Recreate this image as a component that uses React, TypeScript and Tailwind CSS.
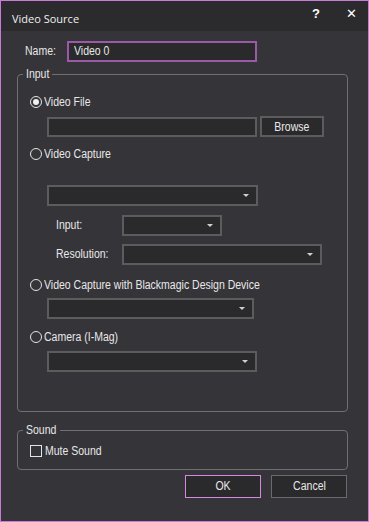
import { ReactNode } from "react";

const font = { fontFamily: '"Liberation Sans", Arial, sans-serif' };

// WinForms text looks condensed next to Arial, squeeze it a bit
const T = ({ children, center }: { children: ReactNode; center?: boolean }) => (
  <span className={`inline-block whitespace-nowrap scale-x-[0.84] ${center ? "origin-center" : "origin-left"}`}>
    {children}
  </span>
);

const Radio = ({ checked, label }: { checked?: boolean; label: string }) => (
  <div className="flex items-center h-[16px]">
    <span className="w-[12px] h-[12px] rounded-full border border-[#e4e4e4] flex items-center justify-center shrink-0">
      {checked && <span className="w-[6px] h-[6px] rounded-full bg-[#f0f0f0]" />}
    </span>
    <span className="ml-[2px]">
      <T>{label}</T>
    </span>
  </div>
);

const Combo = ({ width, className = "" }: { width: number; className?: string }) => (
  <div
    className={`h-[21px] bg-[#2a2a2c] border-2 border-[#5c5c5f] flex items-center justify-end pr-[7px] ${className}`}
    style={{ width }}
  >
    <span className="w-0 h-0 border-l-[3px] border-r-[3px] border-t-[3px] border-l-transparent border-r-transparent border-t-[#d0d0d0]" />
  </div>
);

const Group = ({
  title,
  legendWidth,
  className,
  children,
}: {
  title: string;
  legendWidth: string;
  className: string;
  children: ReactNode;
}) => (
  <fieldset className={`border border-[#707073] rounded-[4px] ml-[16px] w-[331px] px-[12px] ${className}`}>
    <legend className={`-ml-[7px] pl-[3px] leading-[14px] overflow-visible whitespace-nowrap ${legendWidth}`}>
      <T>{title}</T>
    </legend>
    {children}
  </fieldset>
);

export default function App() {
  return (
    <div
      className="w-[369px] h-[522px] border border-[#c97bd8] bg-[#353439] text-[#e8e8e8] text-[12.5px] flex flex-col"
      style={font}
    >
      <div className="h-[30px] bg-[#2b2b2d] flex items-center shrink-0 relative">
        <span
          className="ml-[11px] mt-[6px] text-[11px] text-[#f0f0f0]"
          style={{ fontFamily: '"Open Sans", "Noto Sans", sans-serif' }}
        >
          Video Source
        </span>
        <span className="absolute left-[311px] top-[3px] font-bold text-[13px] text-white">?</span>
        <span
          className="absolute left-[345px] top-[3px] font-bold text-[13px] text-white"
          style={{ fontFamily: '"DejaVu Sans", sans-serif' }}
        >
          ✕
        </span>
      </div>

      <div className="flex items-center mt-[10px] h-[21px]">
        <span className="ml-[24px] w-[42px]">
          <T>Name:</T>
        </span>
        <div className="w-[190px] h-[21px] bg-[#2a2a2c] border-2 border-[#9a5aa8] flex items-center px-[5px]">
          <T>Video 0</T>
        </div>
      </div>

      <Group title="Input" legendWidth="w-[29px]" className="mt-[5px] h-[345px]">
        <div className="mt-[13px]">
          <Radio checked label="Video File" />
        </div>
        <div className="flex mt-[7px] ml-[17px] h-[20px]">
          <div className="w-[210px] h-[20px] bg-[#2a2a2c] border-2 border-[#5c5c5f]" />
          <button className="ml-[3px] w-[64px] h-[21px] -mt-[1px] bg-[#2a2a2c] border-2 border-[#5c5c5f]">
            <T center>Browse</T>
          </button>
        </div>
        <div className="mt-[9px]">
          <Radio label="Video Capture" />
        </div>
        <Combo width={211} className="mt-[23px] ml-[17px]" />
        <div className="flex items-center mt-[9px] ml-[26px]">
          <span className="w-[66px]">
            <T>Input:</T>
          </span>
          <Combo width={100} />
        </div>
        <div className="flex items-center mt-[8px] ml-[26px]">
          <span className="w-[66px]">
            <T>Resolution:</T>
          </span>
          <Combo width={200} />
        </div>
        <div className="mt-[12px]">
          <Radio label="Video Capture with Blackmagic Design Device" />
        </div>
        <Combo width={207} className="mt-[5px] ml-[17px]" />
        <div className="mt-[10px]">
          <Radio label="Camera (I-Mag)" />
        </div>
        <Combo width={210} className="mt-[6px] ml-[17px]" />
      </Group>

      <Group title="Sound" legendWidth="w-[37px]" className="mt-[11px] h-[47px]">
        <div className="flex items-center h-[14px] mt-[7px]">
          <span className="w-[12px] h-[12px] border border-[#e4e4e4] shrink-0" />
          <span className="ml-[3px]">
            <T>Mute Sound</T>
          </span>
        </div>
      </Group>

      <div className="flex justify-end gap-[10px] mt-[5px] mr-[21px]">
        <button className="w-[76px] h-[23px] bg-[#2a2a2c] border border-[#d58ae0]">
          <T center>OK</T>
        </button>
        <button className="w-[76px] h-[23px] bg-[#2a2a2c] border border-[#6a6a6d]">
          <T center>Cancel</T>
        </button>
      </div>
    </div>
  );
}
